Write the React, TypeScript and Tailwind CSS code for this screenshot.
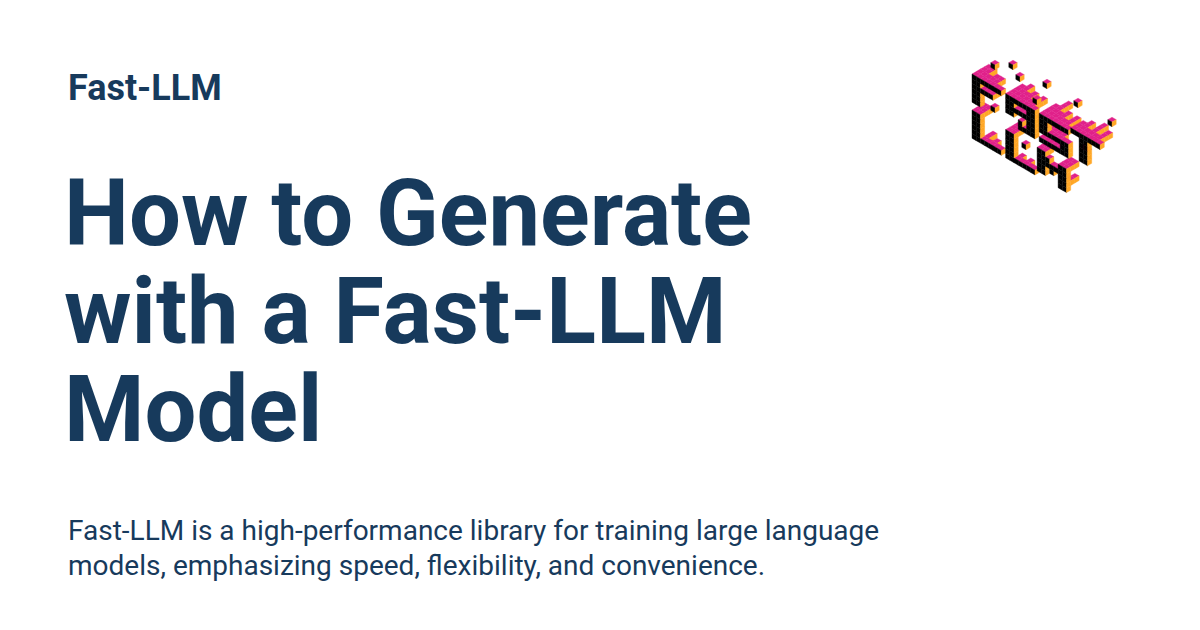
const DX = 4.2;
const DY = 2.45;
const DH = 4.7;
const OX = 2;
const OY = 24;

// one row of digits per voxel row: each digit is how deep that voxel goes back
const letters: { x: number; y: number; rows: string[] }[] = [
  { x: 0, y: 0, rows: ["4423311", "11.....", "11112..", "11.....", "11.....", "11....."] },
  { x: 8, y: 0, rows: ["4534241", "11...11", "1111111", "11...11", "...1.11", "...1111"] },
  { x: 16, y: 0, rows: ["4634241", "11.....", "11.....", "2222211", ".....11", "1111111"] },
  { x: 23.5, y: -0.8, rows: ["3425241", "..22...", "..11...", "..11...", "..11...", "..11..."] },
  { x: 0, y: 7.66, rows: ["33.....", "11.....", "11.....", "11.....", "11.....", "1131211"] },
  { x: 8, y: 7.66, rows: ["33.....", "11.....", "11.....", "11.....", "11.....", "1121211"] },
  { x: 15.5, y: 7.5, rows: ["22.....", "111..33", "1111111", "11.1.11", "11...13", ".....11"] },
];

// loose cubes floating around the letters, centres in svg pixels
const loose: [number, number][] = [
  [25, 15],
  [43, 15],
  [50, 27],
  [77, 34],
  [67, 50],
  [108, 53],
  [25, 58],
  [142, 72],
  [56, 95],
];

type Cube = [number, number, number];

function cubes(): Cube[] {
  const out: Cube[] = [];
  for (const l of letters) {
    l.rows.forEach((row, r) => {
      row.split("").forEach((c, i) => {
        if (c === ".") return;
        for (let z = 0; z < Number(c); z++) out.push([l.x + i, l.y + r, z]);
      });
    });
  }
  // back to front: low, far and left go first
  return out.sort((a, b) => b[1] - a[1] || b[2] - a[2] || a[0] - b[0]);
}

function Cube3d({ px, py, top, front, right }: { px: number; py: number; top: boolean; front: boolean; right: boolean }) {
  return (
    <g strokeWidth="0.4">
      {top && <path d={`M${px} ${py}l${DX} ${-DY}l${DX} ${DY}l${-DX} ${DY}z`} fill="#e0218a" stroke="#e0218a" />}
      {front && <path d={`M${px} ${py}l${DX} ${DY}v${DH}l${-DX} ${-DY}z`} fill="#000" stroke="#000" />}
      {right && <path d={`M${px + DX} ${py + DY}l${DX} ${-DY}v${DH}l${-DX} ${DY}z`} fill="#ffa726" stroke="#ffa726" />}
    </g>
  );
}

function VoxelLogo() {
  const list = cubes();
  const has = new Set(list.map((c) => c.join(",")));
  return (
    <svg width="170" height="150" viewBox="0 0 170 150" className="shrink-0">
      {list.map(([x, y, z], i) => (
        <Cube3d
          key={i}
          px={OX + (x + z) * DX}
          py={OY + (x - z) * DY + y * DH}
          top={!has.has(`${x},${y - 1},${z}`)}
          front={!has.has(`${x},${y},${z - 1}`)}
          right={!has.has(`${x + 1},${y},${z}`)}
        />
      ))}
      {loose.map(([cx, cy], i) => (
        <Cube3d key={i} px={cx - DX} py={cy - DH / 2} top front right />
      ))}
    </svg>
  );
}

export default function App() {
  return (
    <div className="w-[1200px] h-[630px] bg-white overflow-hidden flex justify-between pl-[68px] pr-[60px] font-['Roboto',sans-serif] text-[#173a5c]">
      <div className="flex flex-col w-[830px]">
        <div className="mt-[66px] text-[36px] leading-[44px] font-bold">Fast-LLM</div>
        <h1 className="mt-[55px] text-[92px] leading-[98px] font-bold -ml-[4px]">
          How to Generate
          <br />
          with a Fast-LLM
          <br />
          Model
        </h1>
        <p className="mt-[54px] text-[28px] leading-[35px]">
          Fast-LLM is a high-performance library for training large language models, emphasizing speed, flexibility, and convenience.
        </p>
      </div>
      <div className="mt-[50px]">
        <VoxelLogo />
      </div>
    </div>
  );
}
